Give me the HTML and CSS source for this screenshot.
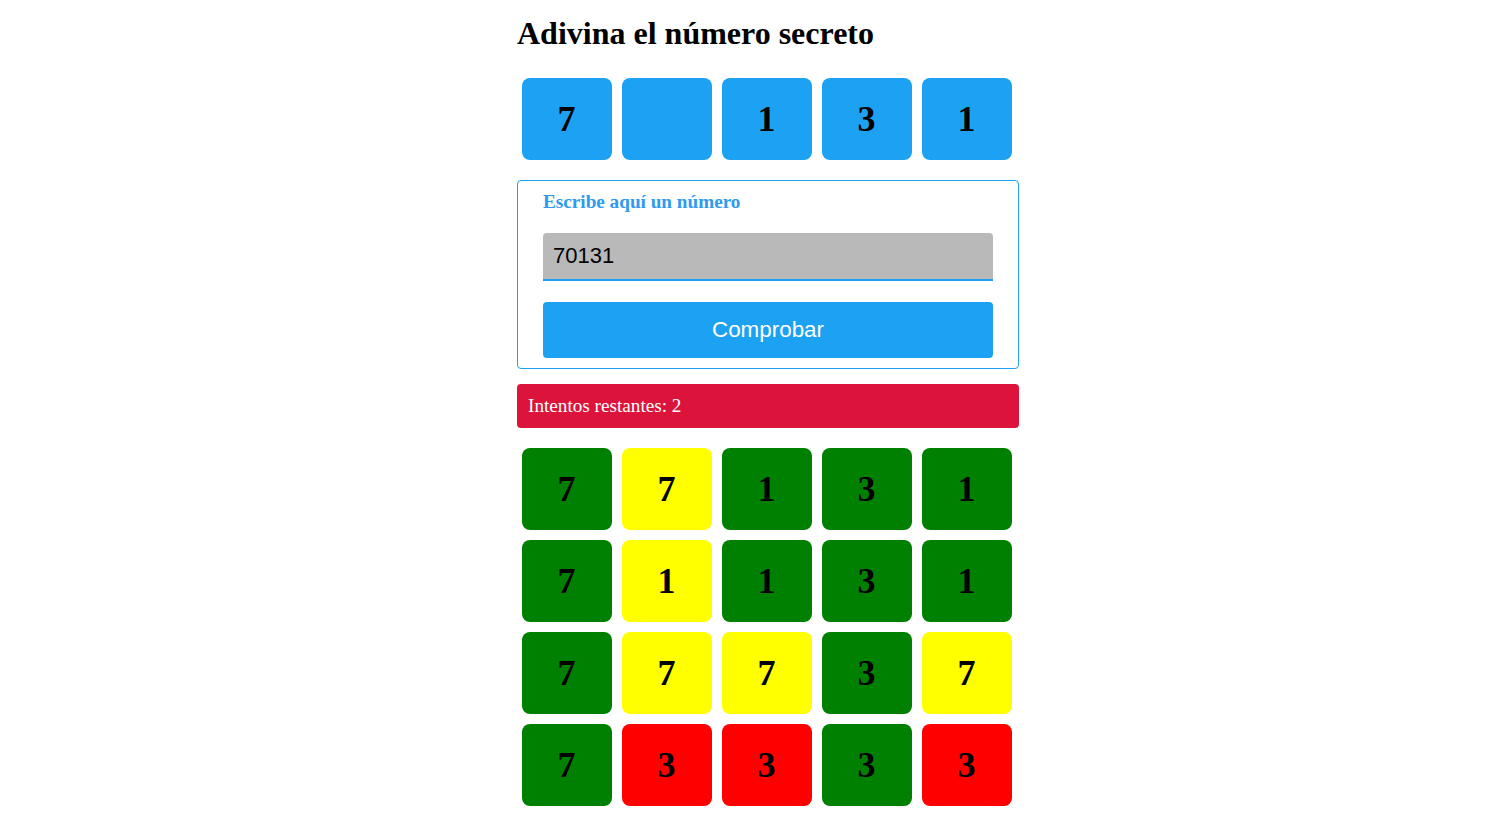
FILE: index.html
```html
<!DOCTYPE html>
<html lang="es">
<head>
<meta charset="utf-8">
<title>Adivina el número secreto</title>
<link rel="stylesheet" href="styles.css">
</head>
<body>
<main class="app">
  <h1 class="title">Adivina el número secreto</h1>
  <div class="row">
    <div class="tile blue">7</div>
    <div class="tile blue"></div>
    <div class="tile blue">1</div>
    <div class="tile blue">3</div>
    <div class="tile blue">1</div>
  </div>
  <form class="card">
    <label class="label" for="num">Escribe aquí un número</label>
    <input class="input" id="num" type="text" value="70131">
    <button class="btn" type="button">Comprobar</button>
  </form>
  <div class="msg">Intentos restantes: 2</div>
  <div class="grid">
    <div class="row">
      <div class="tile green">7</div>
      <div class="tile yellow">7</div>
      <div class="tile green">1</div>
      <div class="tile green">3</div>
      <div class="tile green">1</div>
    </div>
    <div class="row">
      <div class="tile green">7</div>
      <div class="tile yellow">1</div>
      <div class="tile green">1</div>
      <div class="tile green">3</div>
      <div class="tile green">1</div>
    </div>
    <div class="row">
      <div class="tile green">7</div>
      <div class="tile yellow">7</div>
      <div class="tile yellow">7</div>
      <div class="tile green">3</div>
      <div class="tile yellow">7</div>
    </div>
    <div class="row">
      <div class="tile green">7</div>
      <div class="tile red">3</div>
      <div class="tile red">3</div>
      <div class="tile green">3</div>
      <div class="tile red">3</div>
    </div>
  </div>
</main>
</body>
</html>
```
FILE: styles.css
```css
* { box-sizing: border-box; }
html, body { margin: 0; padding: 0; background: #fff; }
body {
  font-family: "Liberation Serif", "Times New Roman", serif;
  display: flex;
  justify-content: center;
  padding-left: 48px;
}
.app {
  width: 502px;
  display: flex;
  flex-direction: column;
}
.title {
  font-size: 32px;
  font-weight: bold;
  margin: 15px 0 27px 0;
  line-height: 36px;
  color: #000;
}
.row {
  display: flex;
  gap: 10px;
  padding: 0 5px;
  width: 500px;
}
.tile {
  width: 90px;
  height: 82px;
  border-radius: 8px;
  display: flex;
  align-items: center;
  justify-content: center;
  font-size: 36px;
  font-weight: bold;
  color: #000;
  padding: 0 1px 1px 0;
}
.blue { background: #1da1f2; }
.green { background: #008000; }
.yellow { background: #ffff00; }
.red { background: #ff0000; }
.card {
  margin: 20px 0 0 0;
  border: 1px solid #1da1f2;
  border-radius: 4px;
  padding: 10px 25px 10px 25px;
  display: flex;
  flex-direction: column;
}
.label {
  color: #2e9af0;
  font-weight: bold;
  font-size: 19.2px;
  line-height: 22px;
}
.input {
  margin-top: 20px;
  height: 48px;
  border: none;
  border-bottom: 2px solid #1da1f2;
  border-radius: 4px 4px 0 0;
  background: #b9b9b9;
  font-family: "Liberation Sans", Arial, sans-serif;
  font-size: 22px;
  padding: 0 10px;
  color: #000;
  outline: none;
}
.btn {
  margin-top: 21px;
  height: 56px;
  border: none;
  border-radius: 4px;
  background: #1da1f2;
  color: #fff;
  font-family: "Liberation Sans", Arial, sans-serif;
  font-size: 22.4px;
}
.msg {
  margin-top: 15px;
  height: 44px;
  background: #dc143c;
  color: #fff;
  border-radius: 4px;
  font-size: 19.2px;
  padding: 0 11px;
  display: flex;
  align-items: center;
}
.grid {
  margin-top: 20px;
  display: flex;
  flex-direction: column;
  gap: 10px;
}
```
